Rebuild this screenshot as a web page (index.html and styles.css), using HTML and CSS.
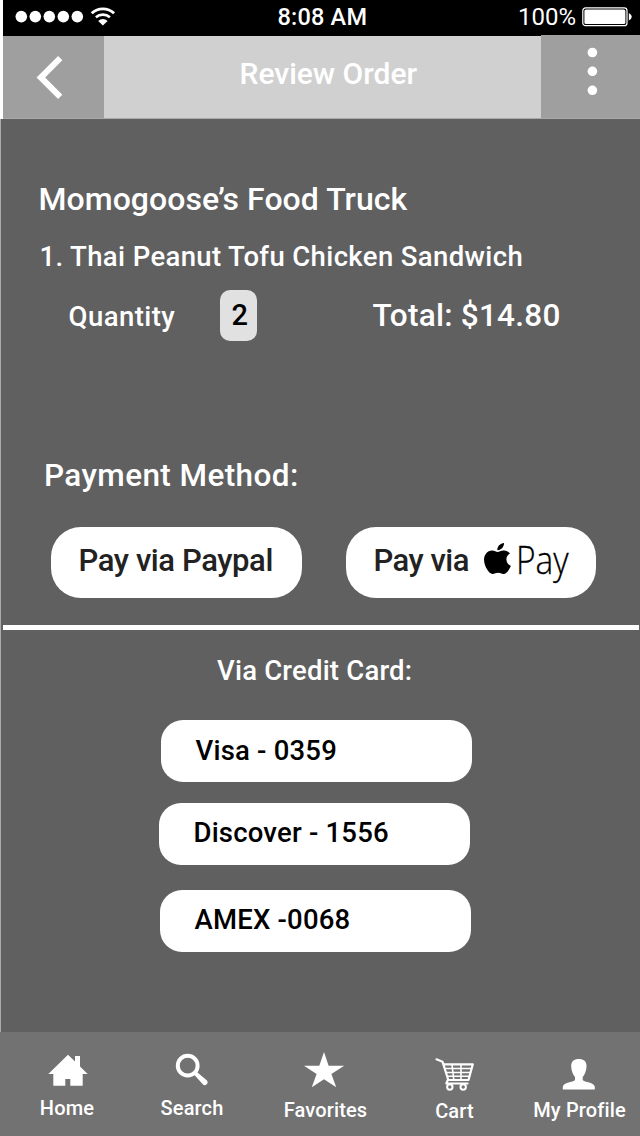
FILE: index.html
```html
<!DOCTYPE html>
<html lang="en">
<head>
<meta charset="utf-8">
<title>Review Order</title>
<link rel="stylesheet" href="styles.css">
</head>
<body>
<div class="screen">
  <div class="status">
    <svg class="signal" width="114" height="36" viewBox="0 0 114 36" fill="#fff">
      <circle cx="18.3" cy="16.6" r="5.8"/><circle cx="32.3" cy="16.6" r="5.8"/><circle cx="46.3" cy="16.6" r="5.8"/><circle cx="60.3" cy="16.6" r="5.8"/><circle cx="74.3" cy="16.6" r="5.8"/>
      <g transform="translate(-3.4 0)" fill="none" stroke="#fff" stroke-width="2.9">
        <path d="M92.1 13.3a16.5 16.5 0 0 1 22.4 0"/>
        <path d="M96.3 17.3a10.4 10.4 0 0 1 14 0" stroke-width="2.6"/>
        <path d="M98.6 20.900a7 7 0 0 1 9.400 0L103.300 25.500z" fill="#fff" stroke="none"/>
      </g>
    </svg>
    <span class="clock">8:08 AM</span>
    <div class="power">
      <span class="percent">100%</span>
      <svg width="50" height="20" viewBox="0 0 50 20">
        <rect x=".8" y=".9" width="44.200" height="17.800" rx="2.800" fill="none" stroke="#fff" stroke-width="1.200"/>
        <rect x="2.400" y="2.500" width="41" height="14.600" rx="1.500" fill="#fff"/>
        <path d="M46.800 6q3 1.500 3 3.700t-3 3.700z" fill="#fff"/>
      </svg>
    </div>
  </div>
  <header class="bar">
    <a class="bar-btn back"><svg width="101" height="82" viewBox="0 0 101 82"><path d="M57.200 22.200 37.800 41.500l19.400 19.300" fill="none" stroke="#fff" stroke-width="6"/></svg></a>
    <h1 class="title">Review Order</h1>
    <a class="bar-btn menu"><svg width="99" height="82" viewBox="0 0 99 82" fill="#fff"><circle cx="51.400" cy="17.500" r="4.800"/><circle cx="51.400" cy="36.300" r="4.800"/><circle cx="51.400" cy="55.300" r="4.800"/></svg></a>
  </header>
  <main class="main">
    <h2 class="truck">Momogoose’s Food Truck</h2>
    <p class="item">1. Thai Peanut Tofu Chicken Sandwich</p>
    <div class="summary">
      <span class="qty-label">Quantity</span>
      <span class="qty">2</span>
      <span class="total">Total: $14.80</span>
    </div>
    <h2 class="method">Payment Method:</h2>
    <div class="pay-row">
      <button class="pay paypal">Pay via Paypal</button>
      <button class="pay apple"><span>Pay via</span>
        <svg width="27" height="31" viewBox="2.200 0 19.700 24" preserveAspectRatio="none"><path d="M12.152 6.896c-.948 0-2.415-1.078-3.960-1.040-2.040.027-3.910 1.183-4.961 3.014-2.117 3.675-.546 9.103 1.519 12.090 1.013 1.454 2.208 3.090 3.792 3.039 1.520-.065 2.090-.987 3.935-.987 1.831 0 2.350.987 3.960.948 1.637-.026 2.676-1.480 3.676-2.948 1.156-1.688 1.636-3.325 1.662-3.415-.039-.013-3.182-1.221-3.220-4.857-.026-3.040 2.480-4.494 2.597-4.559-1.429-2.090-3.623-2.324-4.390-2.376-2-.156-3.675 1.090-4.610 1.090zM15.530 3.830c.843-1.012 1.400-2.427 1.245-3.830-1.207.052-2.662.805-3.532 1.818-.780.896-1.454 2.338-1.273 3.714 1.338.104 2.715-.688 3.559-1.701"/></svg>
        <span class="wordmark">Pay</span>
      </button>
    </div>
    <hr class="rule">
    <h3 class="credit">Via Credit Card:</h3>
    <button class="card visa">Visa - 0359</button>
    <button class="card discover">Discover - 1556</button>
    <button class="card amex">AMEX -0068</button>
  </main>
  <nav class="tabs">
    <a class="tab home"><svg width="44" height="44" viewBox="0 0 44 44" fill="#fff"><path d="M23 4.700 30 11.500V6h5v10.500L42.700 24h-5v11.700H25.300V29h-5v6.700h-12V24h-5z"/></svg><span>Home</span></a>
    <a class="tab search"><svg width="44" height="44" viewBox="0 0 44 44"><circle cx="17.700" cy="15.700" r="9.900" fill="none" stroke="#fff" stroke-width="4"/><path d="M23.300 23.800 26 21.200 36.700 30.300a2.700 2.700 0 0 1-3.900 3.900z" fill="#fff"/></svg><span>Search</span></a>
    <a class="tab favorites"><svg width="44" height="44" viewBox="0 0 44 44" fill="#fff"><path d="M20 2 24.600 15.700H40.200L27.400 24 32.200 37.200 20 29.300 7.800 37.200 12.600 24-.2 15.700H15.300z"/></svg><span>Favorites</span></a>
    <a class="tab cart"><svg width="44" height="44" viewBox="0 0 44 44" fill="none" stroke="#fff" stroke-linecap="round" stroke-linejoin="round"><path d="M3.500 9.300 9.500 11.700 15.300 30H35.500L39.800 14.300H10.500M14.800 30 13.300 33.500H34.500" stroke-width="2.200"/><path d="M12 18.500H38.500M13.200 22.500H37.500M14.500 26.300H36.500M19 14.500 20.800 30M28 14.500V30" stroke-width="1.600"/><circle cx="16.800" cy="37" r="2.700" stroke-width="2"/><circle cx="30.200" cy="37" r="2.700" stroke-width="2"/></svg><span>Cart</span></a>
    <a class="tab profile"><svg width="44" height="44" viewBox="0 0 44 44" fill="#fff"><path d="M20.800 9C25.500 9 28.800 11.300 28.500 16.500 28.300 21.300 26.800 24.500 24.700 27V30C26 32.300 36.800 32.300 36.800 37V39.500H4.800V37C4.800 32.300 15.600 32.300 17 30V27C14.900 24.500 13.400 21.300 13.200 16.500 12.900 11.300 16.200 9 20.800 9z"/></svg><span>My Profile</span></a>
  </nav>
</div>
</body>
</html>
```
FILE: styles.css
```css
* { box-sizing: border-box; }
body { margin: 0; background: #fff; }
h1, h2, h3, p, hr { margin: 0; border: 0; }
svg { display: block; flex: none; }

.screen {
  width: 640px;
  height: 1136px;
  display: flex;
  flex-direction: column;
  overflow: hidden;
  font-family: Roboto, sans-serif;
  font-weight: 500;
  color: #fff;
  white-space: nowrap;
}

.status {
  flex: none;
  height: 36px;
  margin-left: 3px;
  padding-right: 8px;
  display: flex;
  background: #000;
}
.clock {
  margin-left: 160.5px;
  font-size: 23.5px;
  line-height: 34px;
  letter-spacing: .2px;
}
.power {
  margin-left: auto;
  display: flex;
  gap: 6px;
}
.percent {
  font-size: 24px;
  font-weight: 400;
  line-height: 34px;
}
.power svg { margin-top: 7px; }

.bar {
  flex: none;
  height: 83px;
  margin-left: 3px;
  display: flex;
  background: #d0d0d0;
  border-bottom: 1px solid #a9a9a9;
}
.bar-btn { flex: none; background: #9f9f9f; }
.back { width: 101px; }
.menu { width: 99px; margin-top: -1px; }
.title {
  flex: 1;
  padding-left: 135.5px;
  font-size: 30px;
  font-weight: 500;
  line-height: 75px;
}

.main {
  flex: none;
  height: 913px;
  padding-top: 60px;
  background: #606060;
  border-left: 1px solid #aaa;
}
.truck {
  padding-left: 37.5px;
  font-size: 32px;
  font-weight: 500;
  line-height: 40px;
  letter-spacing: .05px;
}
.item {
  margin-top: 19.5px;
  padding-left: 38.5px;
  font-size: 27.5px;
  line-height: 36px;
  letter-spacing: .37px;
}
.summary {
  height: 52px;
  margin-top: 15px;
  display: flex;
  line-height: 54px;
}
.qty-label {
  width: 152px;
  padding-left: 67.5px;
  margin-right: 67px;
  font-size: 27.5px;
  letter-spacing: .45px;
}
.qty {
  width: 36.5px;
  height: 51.5px;
  border-radius: 10px;
  background: #e1e1e1;
  color: #000;
  font-size: 29px;
  line-height: 50px;
  padding-left: 11.5px;
}
.total {
  margin-left: 116px;
  font-size: 31.5px;
  line-height: 51px;
  letter-spacing: .25px;
}
.method {
  margin-top: 114px;
  padding-left: 43px;
  font-size: 31.5px;
  font-weight: 500;
  line-height: 40px;
  letter-spacing: .4px;
}
.pay-row {
  margin-top: 31.5px;
  padding-left: 50px;
  display: flex;
  gap: 44px;
}
.pay, .card {
  display: flex;
  border: 0;
  margin: 0;
  background: #fff;
  font-family: inherit;
  font-weight: 500;
  text-align: left;
  white-space: nowrap;
}
.pay {
  width: 250.5px;
  height: 71px;
  padding: 0 0 0 27.5px;
  border-radius: 30px;
  color: #222;
  font-size: 31px;
  line-height: 68px;
  letter-spacing: -.4px;
}
.apple { padding-left: 28px; letter-spacing: -.5px; }
.apple svg { margin: 15.5px 0 0 15px; fill: #000; }
.wordmark {
  margin-left: 5px;
  color: #000;
  font-family: "Open Sans", sans-serif;
  font-size: 38px;
  font-weight: 300;
  line-height: 64px;
  letter-spacing: 0;
  -webkit-text-stroke: .3px #000;
  transform: scaleX(.88);
  transform-origin: 0 0;
}
.rule {
  height: 5px;
  margin: 27px 1px 0 2px;
  background: #fff;
}
.credit {
  margin-top: 23px;
  padding-left: 216px;
  font-size: 27.5px;
  font-weight: 500;
  line-height: 36px;
  letter-spacing: .2px;
}
.card {
  width: 311px;
  height: 62px;
  padding: 0 0 0 35px;
  border-radius: 22px;
  color: #000;
  font-size: 27.5px;
  line-height: 60px;
  letter-spacing: .2px;
}
.visa { margin: 31px 0 0 160px; padding-left: 34.5px; line-height: 61px; }
.discover { margin: 20.5px 0 0 158px; padding-left: 34.5px; }
.amex { margin: 25px 0 0 159px; padding-left: 34.5px; }

.tabs {
  flex: 1;
  padding-top: 18px;
  display: grid;
  grid-template-columns: 134px 116px 151px 107px 143px;
  background: #727272;
}
.tab {
  display: flex;
  flex-direction: column;
  align-items: center;
  font-size: 20px;
  line-height: 24px;
  letter-spacing: .15px;
}
.tab span { margin-top: 2px; }
.favorites span { margin-top: 3.5px; }
.profile span { margin-top: 4px; }
.cart span { margin-top: 5px; }
```
